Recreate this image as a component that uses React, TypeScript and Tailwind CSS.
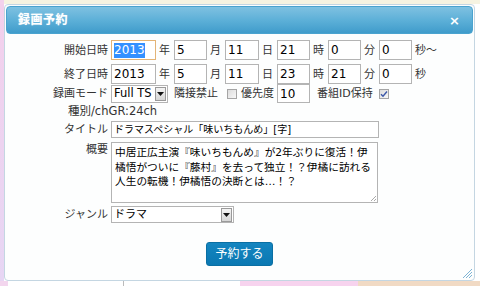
import React from "react";

const font = { fontFamily: '"DejaVu Sans", "Noto Sans CJK JP", sans-serif' };

function Box({ w, h = 20, children, focus = false }: { w: number; h?: number; children?: React.ReactNode; focus?: boolean }) {
  return (
    <div
      className={`flex items-center pl-[2px] bg-white text-[12px] text-black leading-none border ${focus ? "border-[#e3b477]" : "border-[#b4b4b4]"}`}
      style={{ width: w, height: h }}
    >
      {children}
    </div>
  );
}

function Unit({ c }: { c: string }) {
  return <span className="mx-[3px] mr-[4px] w-[11px] text-[11px] text-[#333] leading-none">{c}</span>;
}

function Arrow({ h }: { h: number }) {
  return (
    <div className="ml-auto mr-[1px] flex items-center justify-center w-[11px] border border-[#9a9a9a] bg-gradient-to-b from-[#f4f4f4] to-[#d6d6d6]" style={{ height: h }}>
      <svg width="7" height="4" viewBox="0 0 7 4"><path d="M0 0h7L3.5 4z" fill="#111" /></svg>
    </div>
  );
}

function Check({ checked }: { checked?: boolean }) {
  return (
    <div className="w-[10px] h-[10px] border border-[#a5a5a5] bg-gradient-to-br from-[#dcdcdc] to-[#f8f8f8] flex items-center justify-center">
      {checked && (
        <svg width="8" height="8" viewBox="0 0 8 8"><path d="M1 4.2l2 2L7 1.5" stroke="#3b57a8" strokeWidth="1.4" fill="none" /></svg>
      )}
    </div>
  );
}

function Label({ children, top = false }: { children: React.ReactNode; top?: boolean }) {
  return (
    <div className={`w-[105px] shrink-0 pr-[3px] flex justify-end text-[11px] text-[#333] leading-none ${top ? "items-start pt-[2px]" : "items-center"}`}>
      {children}
    </div>
  );
}

function DateRow({ label, vals, last }: { label: string; vals: string[]; last: string }) {
  const units = ["年", "月", "日", "時", "分"];
  return (
    <div className="flex h-[20px]">
      <Label>{label}</Label>
      <div className="flex items-center">
        {vals.map((v, i) => (
          <React.Fragment key={i}>
            {i === 0 && label === "開始日時" ? (
              <Box w={45} focus>
                <span className="bg-[#3390ff] text-white leading-[15px]">{v}</span>
              </Box>
            ) : (
              <Box w={i === 0 ? 45 : i === 2 ? 34 : 33}>{v}</Box>
            )}
            {i < 5 ? <Unit c={units[i]} /> : <span className="ml-[3px] text-[11px] text-[#333] leading-none">{last}</span>}
          </React.Fragment>
        ))}
      </div>
    </div>
  );
}

export default function App() {
  return (
    <div className="relative w-[480px] h-[286px] overflow-hidden bg-white" style={font}>
      {/* background page */}
      <div className="flex flex-col h-full">
        <div className="h-[4px] bg-[#f6f3e1] flex">
          <div className="w-[4px] bg-[#f3d2ec]" />
        </div>
        <div className="flex-1 flex">
          <div className="w-[4px] bg-gradient-to-b from-[#f3d0ec] to-[#e7d6f4]" />
          <div className="flex-1 bg-white" />
        </div>
        <div className="h-[5px] flex">
          <div className="w-[8px] bg-[#f3d6ee]" />
          <div className="w-[116px] bg-white border-r border-[#bbb]" />
          <div className="w-[116px] bg-white" />
          <div className="w-[118px] bg-[#f7d3ee]" />
          <div className="flex-1 bg-[#f1dac4]" />
        </div>
      </div>

      {/* dialog */}
      <div className="absolute left-[4px] top-[4px] w-[471px] h-[277px] rounded-[4px] border border-[#c4d6e2] bg-[#fdfefe] p-[1px] flex flex-col">
        <div className="h-[28px] shrink-0 rounded-[4px] border border-[#4aa3cf] bg-gradient-to-b from-[#7ec1e1] via-[#5db0d8] to-[#3f9ccb] flex items-center px-[11px]">
          <span className="text-white font-bold text-[12px] tracking-[0.5px] [text-shadow:0_0_1px_rgba(255,255,255,0.6)]">録画予約</span>
          <span className="ml-auto mr-[1px] text-white font-bold text-[13px] leading-none">×</span>
        </div>

        <div className="flex flex-col pt-[6px]">
          <DateRow label="開始日時" vals={["2013", "5", "11", "21", "0", "0"]} last="秒〜" />
          <div className="h-[4px]" />
          <DateRow label="終了日時" vals={["2013", "5", "11", "23", "21", "0"]} last="秒" />

          <div className="flex h-[19px]">
            <Label>録画モード</Label>
            <div className="flex items-center">
              <div className="w-[57px] h-[18px] border border-[#b4b4b4] bg-white flex items-center pl-[2px] text-[11.5px] text-black leading-none whitespace-nowrap">
                Full TS
                <Arrow h={14} />
              </div>
              <span className="ml-[6px] text-[11px] text-[#333] leading-none">隣接禁止</span>
              <div className="ml-[9px]"><Check /></div>
              <span className="ml-[4px] text-[11px] text-[#333] leading-none">優先度</span>
              <div className="ml-[3px]"><Box w={33} h={19}>10</Box></div>
              <span className="ml-[7px] text-[11px] text-[#333] leading-none">番組ID保持</span>
              <div className="ml-[6px]"><Check checked /></div>
            </div>
          </div>

          <div className="h-[18px] flex items-center pl-[62px] text-[11.5px] text-[#333] leading-none">種別/chGR:24ch</div>

          <div className="flex h-[17px]">
            <Label>タイトル</Label>
            <div className="w-[268px] h-[17px] border border-[#b4b4b4] bg-white flex items-center pl-[2px] text-[10px] text-black leading-none whitespace-nowrap">
              ドラマスペシャル「味いちもんめ」[字]
            </div>
          </div>

          <div className="flex mt-[4px]">
            <Label top>概要</Label>
            <div className="relative w-[267px] h-[61px] border border-[#b4b4b4] bg-white pl-[3px] pt-[3px] text-[10.7px] text-black leading-[14.5px] whitespace-nowrap">
              <div>中居正広主演『味いちもんめ』が2年ぶりに復活！伊</div>
              <div>橘悟がついに『藤村』を去って独立！？伊橘に訪れる</div>
              <div>人生の転機！伊橘悟の決断とは…！？</div>
              <svg className="absolute right-[1px] bottom-[1px]" width="6" height="6" viewBox="0 0 6 6">
                <path d="M6 1L1 6M6 4L4 6" stroke="#aaa" strokeWidth="1" />
              </svg>
            </div>
          </div>

          <div className="flex h-[17px] mt-[3px]">
            <Label>ジャンル</Label>
            <div className="w-[123px] h-[17px] border border-[#b4b4b4] bg-white flex items-center pl-[2px] text-[11px] text-black leading-none">
              ドラマ
              <Arrow h={14} />
            </div>
          </div>

          <div className="flex justify-center mt-[19px]">
            <div className="w-[67px] h-[24px] rounded-[3px] border border-[#0a6fa3] bg-gradient-to-b from-[#1485c0] to-[#0a78b2] flex items-center justify-center text-white text-[12px] leading-none">
              予約する
            </div>
          </div>
        </div>

        <svg className="absolute right-[2px] bottom-[2px]" width="10" height="10" viewBox="0 0 10 10">
          <path d="M10 1L1 10M10 4L4 10M10 7L7 10" stroke="#7fb4d4" strokeWidth="1" />
        </svg>
      </div>
    </div>
  );
}
